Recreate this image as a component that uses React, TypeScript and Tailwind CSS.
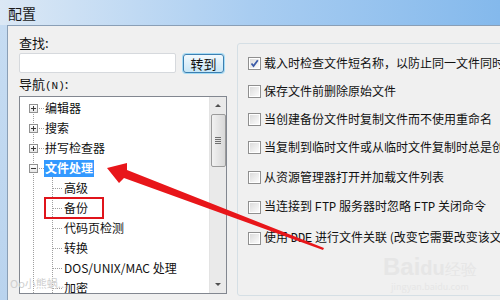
import React from "react";

const treeTop = [
  { label: "编辑器" },
  { label: "搜索" },
  { label: "拼写检查器" },
];
const children = ["高级", "备份", "代码页检测", "转换", "DOS/UNIX/MAC 处理", "加密"];

const mono = "font-['Liberation_Mono',monospace] text-[12px]";

const opts: { t: React.ReactNode; c: boolean; h: number; k: string }[] = [
  { k: "a", t: "载入时检查文件短名称，以防止同一文件同时被打开", c: true, h: 28 },
  { k: "b", t: "保存文件前删除原始文件", c: false, h: 28 },
  { k: "c", t: "当创建备份文件时复制文件而不使用重命名", c: false, h: 28 },
  { k: "d", t: "当复制到临时文件或从临时文件复制时总是创建新文件", c: false, h: 28 },
  { k: "e", t: "从资源管理器打开并加载文件列表", c: false, h: 32 },
  {
    k: "f",
    t: (
      <>
        当连接到 <span className={mono}>FTP</span> 服务器时忽略 <span className={mono}>FTP</span> 关闭命令
      </>
    ),
    c: false,
    h: 28,
  },
  {
    k: "g",
    t: (
      <>
        使用 <span className={mono}>DDE</span> 进行文件关联 (改变它需要改变该文件关联)
      </>
    ),
    c: false,
    h: 34,
  },
];

function PlusBox({ minus }: { minus?: boolean }) {
  return (
    <div className="w-[9px] h-[9px] border border-[#919191] bg-gradient-to-b from-white to-[#e6e6e6] flex items-center justify-center relative shrink-0">
      <div className="w-[5px] h-px bg-[#3a3a3a]" />
      {!minus && <div className="absolute w-px h-[5px] bg-[#3a3a3a]" />}
    </div>
  );
}

function CheckBox({ checked }: { checked: boolean }) {
  return (
    <div className="w-[13px] h-[13px] border border-[#8f8f8f] bg-white p-px shrink-0">
      <div className="w-full h-full bg-gradient-to-br from-[#dcdcdc] to-[#fbfbfb] flex items-center justify-center">
        {checked && (
          <svg width="9" height="9" viewBox="0 0 9 9">
            <path d="M1.5 4.5 L3.5 7 L7.8 1.2" stroke="#3b5ba8" strokeWidth="1.8" fill="none" />
          </svg>
        )}
      </div>
    </div>
  );
}

export default function App() {
  return (
    <div className="w-[500px] h-[300px] overflow-hidden relative flex flex-col bg-[#f0f0f0] font-['Noto_Sans_CJK_SC','Microsoft_YaHei',sans-serif] text-[#111]">
      {/* title bar */}
      <div className="h-[25px] shrink-0 bg-gradient-to-r from-[#dbe8f5] via-[#a9cdf1] to-[#84b9ec] flex items-center pl-[8px]">
        <span className="text-[14px] leading-none text-[#1a1a1a]">配置</span>
      </div>
      <div className="flex flex-1 min-h-0">
        <div className="w-[7px] shrink-0 bg-gradient-to-b from-[#c6dcf2] to-[#b9d3ee]" />
        <div className="flex-1 min-w-0 bg-[#f0f0f0] border-l border-t border-[#8a9fb6] flex">
          {/* left column */}
          <div className="w-[219px] shrink-0 pl-[11px] pt-[9px] flex flex-col">
            <div className="text-[13px] leading-[16px] h-[17px]">查找:</div>
            <div className="flex items-center gap-[7px] mt-[1px]">
              <div className="w-[157px] h-[20px] bg-white border border-[#d6d9dd] rounded-[2px]" />
              <div className="w-[41px] h-[19px] rounded-[3px] border border-[#3c7fb1] shadow-[0_0_0_1px_#a6dcf5] bg-gradient-to-b from-[#f2f9fd] to-[#c8e6f6] flex items-center justify-center text-[13px] leading-none">
                转到
              </div>
            </div>
            <div className="text-[13px] leading-[16px] mt-[3px]">
              导航<span className="font-['Liberation_Mono',monospace] text-[11px]">(N)</span>:
            </div>
            <div className="mt-[2px] w-[208px] h-[198px] bg-white border border-[#828790] flex overflow-hidden">
              <div className="flex-1 relative pt-[1px] text-[12px]">
                {/* vertical dotted line */}
                <div className="absolute left-[13px] top-[10px] bottom-0 border-l border-dotted border-[#a0a0a0]" />
                <div className="absolute left-[32px] top-[80px] bottom-0 border-l border-dotted border-[#a0a0a0]" />
                {treeTop.map((it) => (
                  <div key={it.label} className="h-[20px] flex items-center pl-[9px] relative">
                    <PlusBox />
                    <div className="w-[5px] border-t border-dotted border-[#a0a0a0] ml-[1px] mr-[1px]" />
                    <span className="leading-none">{it.label}</span>
                  </div>
                ))}
                <div className="h-[20px] flex items-center pl-[9px] relative">
                  <PlusBox minus />
                  <div className="w-[5px] border-t border-dotted border-[#a0a0a0] ml-[1px]" />
                  <span className="bg-[#3399ff] text-white font-bold px-[1px] h-[17px] flex items-center leading-none">
                    文件处理
                  </span>
                </div>
                {children.map((c) => (
                  <div key={c} className="h-[20px] flex items-center pl-[33px]">
                    <div className="w-[9px] border-t border-dotted border-[#a0a0a0] mr-[2px]" />
                    <span className="leading-none">{c}</span>
                  </div>
                ))}
              </div>
              {/* scrollbar */}
              <div className="w-[17px] shrink-0 bg-[#eaeaea] border-l border-[#e3e3e3] flex flex-col items-center">
                <div className="h-[17px] flex items-center justify-center">
                  <div className="w-0 h-0 border-l-[3px] border-r-[3px] border-b-[3px] border-l-transparent border-r-transparent border-b-[#505050]" />
                </div>
                <div className="w-[15px] h-[53px] rounded-[2px] border border-[#9b9b9b] bg-gradient-to-r from-[#f2f2f2] to-[#d8d8d8] flex flex-col items-center justify-center gap-px">
                  <div className="w-[6px] h-px bg-[#707070]" />
                  <div className="w-[6px] h-px bg-[#707070]" />
                  <div className="w-[6px] h-px bg-[#707070]" />
                  <div className="w-[6px] h-px bg-[#707070]" />
                </div>
                <div className="flex-1" />
                <div className="h-[17px] flex items-center justify-center">
                  <div className="w-0 h-0 border-l-[3px] border-r-[3px] border-t-[3px] border-l-transparent border-r-transparent border-t-[#505050]" />
                </div>
              </div>
            </div>
          </div>
          {/* right group box */}
          <div className="flex-1 pt-[17px] pl-[10px] pb-[4px]">
            <div className="h-full border border-[#d5dfe5] rounded-[3px] pl-[10px] pt-[5px] whitespace-nowrap overflow-hidden">
              {opts.map((o) => (
                <div key={o.k} className="flex items-center gap-[3px]" style={{ height: o.h }}>
                  <CheckBox checked={o.c} />
                  <span className="text-[12px] leading-none">{o.t}</span>
                </div>
              ))}
            </div>
          </div>
        </div>
      </div>

      {/* red highlight box */}
      <div className="absolute left-[44px] top-[197px] w-[60px] h-[22px] border-2 border-[#e0141b]" />

      {/* red arrow */}
      <svg className="absolute left-0 top-0 pointer-events-none" width="500" height="300" viewBox="0 0 500 300">
        <polygon
          points="107,168 127,163 127,170 324,248 323,250 124,178 119,183"
          fill="#e8161a"
        />
      </svg>

      {/* watermarks */}
      <div className="absolute left-[10px] top-[278px] text-[11px] text-[#cfcfcf] leading-none">Oo小熊蜗...</div>
      <div className="absolute left-[383px] top-[255px] flex flex-col items-center text-[#e6e6e6] leading-none">
        <span className="text-[24px] font-bold font-['Liberation_Sans',sans-serif]">
          Bai<span className="text-[20px]">du</span>
          <span className="text-[16px] font-normal">经验</span>
        </span>
        <span className="text-[9px] mt-[3px]">jingyan.baidu.com</span>
      </div>
    </div>
  );
}
